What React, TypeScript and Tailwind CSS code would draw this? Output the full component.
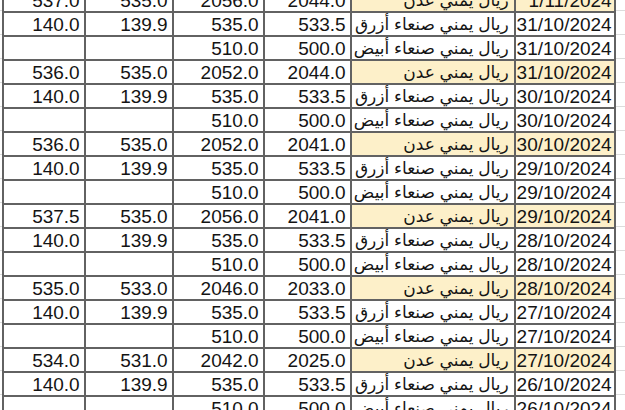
const ADEN = "ريال يمني عدن";
const BLUE = "ريال يمني صنعاء أزرق";
const WHITE = "ريال يمني صنعاء أبيض";

type Row = {
  date: string;
  name: string;
  hl: boolean;
  c4: string;
  c3: string;
  c2: string;
  c1: string;
};

const rows: Row[] = [
  { date: "1/11/2024", name: ADEN, hl: true, c4: "2044.0", c3: "2056.0", c2: "535.0", c1: "537.0" },
  { date: "31/10/2024", name: BLUE, hl: false, c4: "533.5", c3: "535.0", c2: "139.9", c1: "140.0" },
  { date: "31/10/2024", name: WHITE, hl: false, c4: "500.0", c3: "510.0", c2: "", c1: "" },
  { date: "31/10/2024", name: ADEN, hl: true, c4: "2044.0", c3: "2052.0", c2: "535.0", c1: "536.0" },
  { date: "30/10/2024", name: BLUE, hl: false, c4: "533.5", c3: "535.0", c2: "139.9", c1: "140.0" },
  { date: "30/10/2024", name: WHITE, hl: false, c4: "500.0", c3: "510.0", c2: "", c1: "" },
  { date: "30/10/2024", name: ADEN, hl: true, c4: "2041.0", c3: "2052.0", c2: "535.0", c1: "536.0" },
  { date: "29/10/2024", name: BLUE, hl: false, c4: "533.5", c3: "535.0", c2: "139.9", c1: "140.0" },
  { date: "29/10/2024", name: WHITE, hl: false, c4: "500.0", c3: "510.0", c2: "", c1: "" },
  { date: "29/10/2024", name: ADEN, hl: true, c4: "2041.0", c3: "2056.0", c2: "535.0", c1: "537.5" },
  { date: "28/10/2024", name: BLUE, hl: false, c4: "533.5", c3: "535.0", c2: "139.9", c1: "140.0" },
  { date: "28/10/2024", name: WHITE, hl: false, c4: "500.0", c3: "510.0", c2: "", c1: "" },
  { date: "28/10/2024", name: ADEN, hl: true, c4: "2033.0", c3: "2046.0", c2: "533.0", c1: "535.0" },
  { date: "27/10/2024", name: BLUE, hl: false, c4: "533.5", c3: "535.0", c2: "139.9", c1: "140.0" },
  { date: "27/10/2024", name: WHITE, hl: false, c4: "500.0", c3: "510.0", c2: "", c1: "" },
  { date: "27/10/2024", name: ADEN, hl: true, c4: "2025.0", c3: "2042.0", c2: "531.0", c1: "534.0" },
  { date: "26/10/2024", name: BLUE, hl: false, c4: "533.5", c3: "535.0", c2: "139.9", c1: "140.0" },
  { date: "26/10/2024", name: WHITE, hl: false, c4: "500.0", c3: "510.0", c2: "", c1: "" },
];

const cell = "h-[24px] border-2 border-[#626262] text-right align-middle leading-none whitespace-nowrap";

function Faint() {
  return (
    <div className="flex flex-col">
      {rows.map((_, i) => (
        <div key={i} className="h-[24px] border-b border-[#dcdcdc]" />
      ))}
    </div>
  );
}

export default function App() {
  return (
    <div className="w-[625px] h-[410px] overflow-hidden bg-white">
      <div
        className="-mt-[13px] flex flex-row-reverse text-[19px] text-[#141414]"
        style={{ fontFamily: '"Liberation Sans", Arial, "DejaVu Sans", sans-serif' }}
      >
        <div className="w-[11px]">
          <Faint />
        </div>
        <table dir="rtl" className="border-collapse table-fixed w-[612px]">
          <colgroup>
            <col className="w-[100px]" />
            <col className="w-[164px]" />
            <col className="w-[87px]" />
            <col className="w-[91px]" />
            <col className="w-[88px]" />
            <col className="w-[82px]" />
          </colgroup>
          <tbody>
            {rows.map((r, i) => (
              <tr key={i}>
                <td className={`${cell} pr-[2px] ${r.hl ? "bg-[#fdf0c9]" : ""}`} dir="ltr">
                  {r.date}
                </td>
                <td className={`${cell} pr-[5px] text-[17px] ${r.hl ? "bg-[#fdf0c9]" : ""}`}>
                  {r.name}
                </td>
                <td className={`${cell} pr-[4px]`} dir="ltr">{r.c4}</td>
                <td className={`${cell} pr-[4px]`} dir="ltr">{r.c3}</td>
                <td className={`${cell} pr-[4px]`} dir="ltr">{r.c2}</td>
                <td className={`${cell} pr-[4px]`} dir="ltr">{r.c1}</td>
              </tr>
            ))}
          </tbody>
        </table>
        <div className="w-[2px]">
          <Faint />
        </div>
      </div>
    </div>
  );
}
